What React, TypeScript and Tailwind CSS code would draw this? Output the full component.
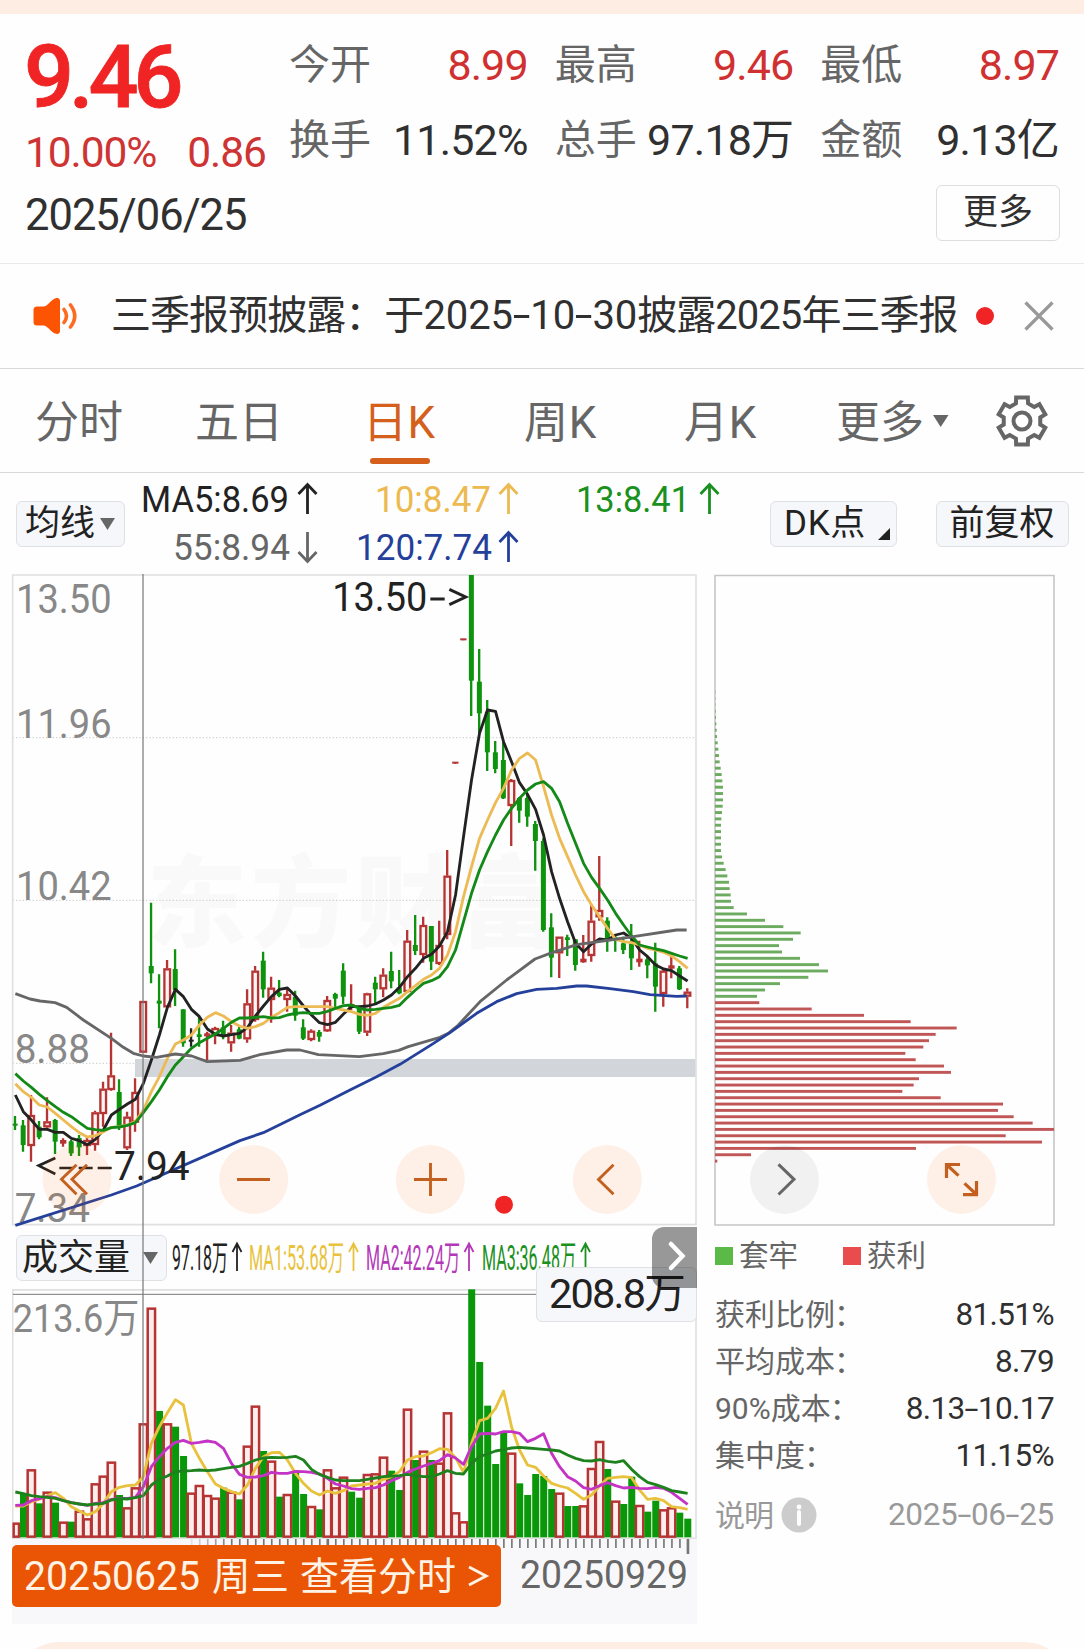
import React from 'react';

type Tone = 'r' | 'g' | 'k';
// [tone, high, body top, body bottom, low]
type Candle = [Tone, number, number, number, number];

const STEP = 24.01;
const START = 46;

const candles: Candle[] = [
  ['g', 648, 671, 677, 690], ['g', 660, 676, 735, 755], ['r', 585, 645, 738, 785], ['g', 663, 680, 712, 718],
  ['r', 592, 664, 682, 685], ['g', 657, 660, 725, 762], ['r', 715, 720, 731, 740], ['g', 720, 724, 760, 768],
  ['g', 705, 714, 742, 768], ['r', 710, 720, 738, 765], ['r', 632, 637, 735, 752], ['r', 545, 566, 642, 680],
  ['r', 398, 526, 570, 572], ['g', 538, 576, 680, 690], ['r', 635, 650, 745, 750], ['r', 535, 576, 668, 695],
  ['r', 303, 303, 458, 458], ['g', 8, 198, 220, 250], ['g', 223, 302, 311, 385], ['r', 180, 205, 322, 322],
  ['g', 148, 207, 270, 318], ['g', 328, 328, 430, 440], ['k', 385, 419, 425, 440], ['g', 350, 403, 411, 440],
  ['r', 395, 400, 409, 480], ['r', 380, 384, 408, 433], ['g', 362, 382, 408, 418], ['r', 375, 398, 430, 455],
  ['g', 378, 388, 416, 418], ['r', 268, 310, 418, 428], ['r', 198, 212, 360, 365], ['g', 155, 182, 268, 293],
  ['r', 230, 263, 300, 368], ['g', 240, 278, 288, 292], ['r', 268, 282, 300, 335], ['g', 272, 290, 347, 362],
  ['g', 358, 382, 416, 420], ['r', 388, 392, 420, 424], ['g', 390, 396, 410, 425], ['r', 288, 300, 394, 396],
  ['g', 278, 282, 296, 325], ['g', 190, 212, 290, 312], ['r', 253, 312, 322, 330], ['g', 318, 325, 395, 402],
  ['r', 278, 280, 398, 408], ['g', 230, 248, 268, 310], ['r', 205, 224, 268, 292], ['g', 155, 213, 244, 265],
  ['g', 210, 262, 280, 283], ['r', 90, 122, 276, 278], ['g', 45, 135, 153, 165], ['r', 50, 75, 165, 188],
  ['g', 78, 78, 185, 210], ['r', 62, 135, 192, 195], ['r', -150, -73, 105, 118], ['r', -412, -415, -409, -412],
  ['r', -782, -785, -779, -782], ['g', -975, -975, -658, -552], ['g', -753, -655, -560, -500], ['g', -600, -565, -443, -387],
  ['g', -477, -443, -393, -380], ['g', -475, -420, -305, -303], ['r', -363, -360, -282, -162], ['g', -308, -306, -268, -232],
  ['g', -315, -306, -250, -220], ['g', -237, -228, -177, -88], ['g', -185, -177, 90, 95], ['g', 40, 82, 173, 232],
  ['r', 110, 110, 160, 234], ['g', 104, 112, 120, 168], ['g', 118, 118, 195, 212], ['r', 105, 176, 187, 188],
  ['r', 12, 62, 168, 185], ['r', -132, 30, 52, 62], ['g', 52, 62, 115, 155], ['g', 108, 112, 122, 155],
  ['g', 110, 130, 150, 162], ['g', 72, 130, 175, 210], ['r', 122, 176, 187, 200], ['g', 170, 178, 196, 235],
  ['g', 128, 190, 260, 335], ['r', 205, 212, 282, 320], ['r', 170, 196, 206, 235], ['g', 198, 205, 268, 270],
  ['r', 265, 275, 290, 325],
];

const ma5 = [
  585, 635, 660, 688, 688, 697, 697, 715, 722, 734, 718, 690, 645, 628, 612, 598, 550, 480, 405, 322, 268, 290, 328, 350,
  387, 403, 408, 404, 400, 383, 348, 318, 290, 268, 264, 288, 318, 345, 368, 374, 367, 342, 320, 320, 318, 312, 300, 285,
  262, 230, 205, 175, 163, 138, 95, -15, -190, -360, -500, -570, -566, -475, -415, -352, -317, -272, -195, -85, -5, 65,
  130, 155, 132, 117, 120, 105, 99, 115, 150, 170, 195, 207, 212, 228, 243,
];

const ma10 = [
  551, 575, 592, 615, 621, 640, 660, 680, 698, 711, 707, 695, 682, 680, 675, 665, 630, 575, 530, 475, 432, 420, 405, 375,
  352, 338, 348, 365, 378, 385, 380, 370, 352, 338, 322, 320, 320, 320, 320, 320, 325, 330, 335, 343, 346, 340, 322, 308,
  295, 275, 257, 238, 225, 205, 165, 95, -10, -100, -185, -240, -292, -335, -390, -425, -441, -420, -340, -255, -185,
  -130, -75, -25, 15, 50, 85, 118, 125, 128, 135, 145, 150, 157, 168, 185, 205,
];

const ma13 = [
  521, 543, 562, 583, 602, 620, 637, 650, 668, 685, 689, 691, 683, 681, 676, 668, 638, 605, 570, 530, 495, 470, 445, 428,
  415, 402, 385, 367, 354, 354, 352, 350, 354, 353, 345, 340, 338, 340, 340, 334, 325, 317, 315, 325, 330, 328, 325, 322,
  316, 292, 270, 250, 242, 230, 200, 150, 65, -20, -90, -145, -195, -240, -275, -305, -330, -348, -355, -335, -295,
  -230, -170, -110, -68, -35, 0, 40, 75, 108, 135, 141, 147, 152, 160, 168, 175,
];

const ma55 =
  '46,281 90,297 120,303 165,308 200,322 250,360 334,415 370,442 400,460 430,468 470,472 526,462 575,468 622,485 720,481 780,464 860,450 900,450 955,464 1078,470 1150,461 1196,451 1225,440 1320,412 1345,400 1375,375 1440,305 1520,240 1605,177 1650,160 1730,134 1830,120 1900,110 2030,90 2060,90';
const ma120 =
  '46,976 334,885 410,858 720,722 790,698 900,644 960,616 1050,570 1130,530 1200,493 1290,437 1350,398 1430,340 1490,305 1550,281 1610,268 1670,265 1730,258 1760,258 1830,266 1900,275 1950,284 2030,289 2060,288';

const volumes: [Tone, number][] = [
  ['r', 878], ['g', 790], ['r', 718], ['g', 820], ['r', 785], ['g', 818], ['r', 875], ['g', 875], ['r', 842], ['r', 865],
  ['r', 760], ['r', 737], ['r', 695], ['g', 795], ['r', 832], ['r', 772], ['r', 580], ['r', 233], ['g', 543], ['r', 580],
  ['g', 590], ['g', 678], ['r', 788], ['r', 765], ['r', 795], ['r', 803], ['g', 773], ['r', 785], ['g', 808], ['r', 647],
  ['r', 527], ['g', 663], ['r', 692], ['g', 800], ['r', 792], ['g', 728], ['g', 792], ['r', 828], ['g', 838], ['r', 718],
  ['r', 772], ['r', 740], ['g', 785], ['g', 803], ['r', 732], ['r', 730], ['r', 680], ['g', 722], ['g', 780], ['r', 536],
  ['g', 690], ['r', 662], ['g', 690], ['r', 698], ['r', 547], ['r', 847], ['r', 874], ['g', 178], ['g', 396], ['g', 527],
  ['g', 702], ['g', 605], ['r', 668], ['g', 760], ['g', 795], ['g', 732], ['g', 738], ['g', 777], ['r', 788], ['g', 828],
  ['g', 828], ['r', 826], ['r', 714], ['r', 633], ['g', 717], ['r', 812], ['g', 822], ['g', 740], ['r', 825], ['g', 845],
  ['g', 812], ['r', 838], ['r', 832], ['g', 848], ['g', 866],
];

const vol1 = [
  828, 828, 815, 808, 797, 788, 805, 830, 843, 855, 845, 820, 785, 772, 767, 765, 740, 640, 590, 548, 509, 525, 640, 685,
  725, 762, 775, 785, 792, 765, 715, 680, 668, 667, 690, 730, 760, 783, 795, 783, 790, 782, 768, 765, 762, 760, 748, 740,
  725, 690, 680, 678, 668, 656, 658, 683, 727, 640, 572, 565, 535, 483, 590, 660, 705, 712, 738, 760, 768, 774, 790, 808,
  795, 768, 745, 742, 740, 743, 780, 808, 805, 812, 830, 833, 838,
];

const vol2 = [
  826, 825, 812, 806, 800, 803, 812, 818, 822, 826, 820, 818, 808, 805, 805, 802, 770, 710, 680, 655, 637, 631, 640, 637,
  633, 637, 655, 700, 733, 742, 741, 737, 727, 730, 730, 724, 725, 727, 732, 745, 762, 768, 776, 778, 775, 773, 765, 752,
  742, 727, 717, 708, 700, 692, 674, 684, 703, 650, 612, 610, 612, 605, 605, 610, 635, 625, 611, 670, 710, 740, 753, 773,
  778, 767, 758, 767, 774, 772, 775, 776, 772, 775, 787, 805, 823,
];

const vol3 = [
  786, 791, 797, 800, 802, 805, 812, 818, 822, 825, 822, 820, 810, 806, 807, 803, 797, 765, 748, 738, 725, 723, 722, 720,
  722, 720, 716, 712, 709, 700, 690, 684, 682, 683, 682, 679, 690, 718, 733, 742, 750, 752, 752, 752, 748, 744, 740, 738,
  737, 733, 737, 740, 740, 732, 722, 730, 732, 700, 680, 672, 663, 659, 654, 652, 654, 656, 658, 660, 663, 675, 685, 692,
  693, 689, 694, 697, 692, 718, 740, 757, 764, 772, 782, 786, 790,
];

const trapped = [
  1, 1, 1, 2, 3, 4, 5, 6, 8, 10, 12, 14, 17, 20, 22, 24, 24, 24, 23, 21, 19, 18, 18, 18, 18, 18, 21, 26, 32, 37, 42, 44,
  47, 48, 56, 96, 150, 205, 257, 234, 192, 201, 255, 312, 339, 280, 195, 150, 126,
];
const profit = [
  133, 290, 447, 587, 725, 662, 642, 625, 571, 602, 687, 708, 612, 596, 562, 677, 864, 849, 896, 953, 1017, 872, 981,
  603, 108, 7,
];

const toneColor = { r: '#b73434', g: '#0f930f', k: '#222222' };

const xAt = (i: number) => START + STEP * i;
const line = (values: number[]) => values.map((v, i) => `${xAt(i).toFixed(1)},${v}`).join(' ');

const gearPoints = [0, 1, 2, 3, 4, 5]
  .flatMap(k => {
    const base = k * 60 - 90;
    return [[18.6, -19], [24.2, -14], [24.2, 14], [18.6, 19]].map(([r, off]) => {
      const a = ((base + off) * Math.PI) / 180;
      return `${(26 + r * Math.cos(a)).toFixed(2)},${(26 + r * Math.sin(a)).toFixed(2)}`;
    });
  })
  .join(' ');

interface LabelProps {
  x: number;
  y: number;
  w: number;
  size: number;
  fill: string;
  children: string;
}

const Label = ({ x, y, w, size, fill, children }: LabelProps) => (
  <text x={x} y={y} fontSize={size} fill={fill} textLength={w} lengthAdjust="spacingAndGlyphs">
    {children}
  </text>
);

// Roboto's hyphen is narrow, dates and ranges use a wider one
const Dashed = ({ text }: { text: string }) => (
  <>
    {text.split('-').map((part, i) => (
      <React.Fragment key={i}>
        {i > 0 && <span className="inline-block mx-[0.08em] scale-x-160">-</span>}
        {part}
      </React.Fragment>
    ))}
  </>
);

const Stat = ({ label, value, red }: { label: string; value: string; red?: boolean }) => (
  <div className="flex items-center justify-between h-[75px]">
    <span className="text-[41px] text-[#666]">{label}</span>
    <span className={red ? 'text-[43px] tracking-[-0.9px] text-[#d03030]' : 'text-[43px] tracking-[-0.8px] text-[#303030]'}>
      {value}
    </span>
  </div>
);

const Header = () => (
  <header className="h-[250px] flex border-b border-[#e9e9e9] pt-[14px]">
    <div className="w-[289px] pl-[25px]">
      <div className="h-[98px] leading-[98px] ml-[-1px] text-[88px] font-medium tracking-[-5px] text-[#f02424] [-webkit-text-stroke:0.8px_#f02424]">9.46</div>
      <div className="h-[54px] leading-[54px] text-[42.5px] tracking-[-1.1px] text-[#cf3434]">
        <span>10.00%</span>
        <span className="ml-[31px]">0.86</span>
      </div>
      <div className="h-[70px] leading-[72px] text-[43.5px] tracking-[-1px] text-[#303030]">2025/06/25</div>
    </div>
    <div className="w-[770px]">
      <div className="grid grid-cols-3 gap-x-[27px]">
        <Stat label="今开" value="8.99" red />
        <Stat label="最高" value="9.46" red />
        <Stat label="最低" value="8.97" red />
        <Stat label="换手" value="11.52%" />
        <Stat label="总手" value="97.18万" />
        <Stat label="金额" value="9.13亿" />
      </div>
      <button className="block ml-auto mr-[-1px] mt-[7px] w-[124px] h-[56px] rounded-[6px] border border-[#dcdfe0] text-[35px] leading-[52px] text-[#303030]">
        更多
      </button>
    </div>
  </header>
);

const Notice = () => (
  <div className="relative h-[105px] flex items-center border-b border-[#d8d8d8] pl-[33px]">
    <svg width="46" height="38" viewBox="0 0 46 38">
      <path d="M4 9.5 H11 C15 8.5 18 3 22 1.4 C25 0.2 27 1.4 27 4 V34 C27 36.6 25 37.8 22 36.6 C18 35 15 29.5 11 28.5 H4 Q0.5 28.5 0.5 25 V13 Q0.5 9.5 4 9.5Z" fill="#fd5403" />
      <path d="M31 12.5 Q36 19 31 25.5" fill="none" stroke="#fd6a20" strokeWidth="3.6" strokeLinecap="round" />
      <path d="M37.5 8 Q46 19 37.5 30" fill="none" stroke="#fd6a20" strokeWidth="3.6" strokeLinecap="round" />
    </svg>
    <span className="ml-[32px] text-[40px] tracking-[-0.95px] text-[#303030]">
      三季报预披露：于
      <span className="tracking-[-0.1px]"><Dashed text="2025-10-30" /></span>
      披露2025年三季报
    </span>
    <i className="absolute left-[976px] size-[18px] rounded-full bg-[#f02424]" />
    <svg className="absolute left-[1024px]" width="30" height="30" viewBox="0 0 30 30">
      <path d="M1.5 1.5 L28.5 28.5 M28.5 1.5 L1.5 28.5" stroke="#999" strokeWidth="3.2" />
    </svg>
  </div>
);

const Tabs = () => (
  <nav className="relative h-[104px] flex items-center border-b border-[#d8d8d8] text-[44px] text-[#666]">
    <span className="w-[160px] pl-[35px] pt-[4px]">分时</span>
    <span className="w-[170px] pl-[35px] pt-[4px]">五日</span>
    <span className="w-[160px] pl-[33px] pt-[4px] tracking-[0.5px] text-[#d4601c]">日K</span>
    <span className="w-[160px] pl-[34px] pt-[4px] tracking-[0.8px]">周K</span>
    <span className="w-[186px] pl-[34px] pt-[4px] tracking-[0.8px]">月K</span>
    <span className="pt-[4px]">更多</span>
    <svg className="ml-[9px]" width="16" height="12" viewBox="0 0 16 12">
      <path d="M0 0 H15.5 L7.7 12Z" fill="#666" />
    </svg>
    <svg className="ml-[47px]" width="52" height="52" viewBox="0 0 52 52" fill="none" stroke="#666" strokeWidth="4">
      <polygon points={gearPoints} />
      <circle cx="26" cy="26" r="8.5" />
    </svg>
    <i className="absolute left-[370px] top-[89px] w-[60px] h-[6px] rounded-full bg-[#d4601c]" />
  </nav>
);

const chip = 'flex items-center h-[46px] rounded-[6px] border border-[#dfe1e5] bg-[#f6f7fa] text-[35px] text-[#222] leading-none';

const Indicators = () => (
  <div className="h-[102px] flex items-center">
    <div className={`${chip} ml-[16px] w-[109px] pl-[8px]`}>
      <span className="pb-px">均线</span>
      <svg className="ml-[5px]" width="15" height="12" viewBox="0 0 15 12"><path d="M0 0 H15 L7.5 12Z" fill="#666" /></svg>
    </div>
    <svg className="ml-[10px]" width="600" height="102" viewBox="135 473 600 102">
      <Label x={141} y={512} w={148} size={36.5} fill="#222">MA5:8.69</Label>
      <Label x={375} y={512} w={116} size={36.5} fill="#ecba50">10:8.47</Label>
      <Label x={576} y={512} w={114} size={36.5} fill="#1a9020">13:8.41</Label>
      <Label x={173} y={560} w={117} size={36.5} fill="#666">55:8.94</Label>
      <Label x={356} y={560} w={136} size={36.5} fill="#24409a">120:7.74</Label>
      <g fill="none" strokeWidth="2.8">
        <path d="M307.5 514 V485 M298.5 494 L307.5 484.5 L316.5 494" stroke="#222" />
        <path d="M508.5 514 V485 M499.5 494 L508.5 484.5 L517.5 494" stroke="#ecba50" />
        <path d="M709.5 514 V485 M700.5 494 L709.5 484.5 L718.5 494" stroke="#1a9020" />
        <path d="M307.5 532 V561 M298.5 552 L307.5 561.5 L316.5 552" stroke="#666" />
        <path d="M508.5 562 V533 M499.5 542 L508.5 532.5 L517.5 542" stroke="#24409a" />
      </g>
    </svg>
    <div className={`${chip} relative ml-[35px] w-[127px] pl-[13px]`}>
      <span className="pb-px tracking-[0.7px]">DK点</span>
      <svg className="absolute right-[6px] bottom-[6px]" width="12" height="12" viewBox="0 0 12 12"><path d="M12 0 V12 H0Z" fill="#222" /></svg>
    </div>
    <div className={`${chip} ml-[39px] w-[133px] justify-center`}>
      <span className="pb-px mr-[1px]">前复权</span>
    </div>
  </div>
);

const PriceChart = () => (
  <svg className="block overflow-visible" width="685" height="651" viewBox="36 -978 2055 1953">
    <g fill="#f9f9f9" fontSize="300" fontWeight="900">
      <text x="440" y="116" textLength="1240">东方财富</text>
    </g>
    <g stroke="#c9c9c9" strokeWidth="3" strokeDasharray="4 6">
      <path d="M38 -487 H2088 M38 1 H2088 M38 490 H2088" />
    </g>
    <rect x="405" y="477" width="1683" height="54" fill="#d2d6db" />
    <path d="M38 -975 H2088 V974 H38Z" fill="none" stroke="#e0e0e0" strokeWidth="5" />
    <Label x={48} y={-861} w={287} size={122} fill="#888">13.50</Label>
    <Label x={48} y={-486} w={287} size={122} fill="#888">11.96</Label>
    <Label x={48} y={0} w={287} size={122} fill="#888">10.42</Label>
    <Label x={44} y={488} w={226} size={122} fill="#888">8.88</Label>
    <Label x={44} y={965} w={226} size={122} fill="#888">7.34</Label>
    {candles.map(([tone, high, top, bottom, low], i) => {
      const x = xAt(i) - 1;
      const color = toneColor[tone];
      const hollow = tone === 'r' && bottom - top > 13;
      return (
        <g key={i}>
          <path d={`M${x} ${high} V${hollow ? top : bottom} M${x} ${bottom} V${low}`} stroke={color} strokeWidth="7" />
          {hollow ? (
            <rect x={x - 8} y={top + 3} width="17" height={bottom - top - 6} fill="#fff4f4" stroke={color} strokeWidth="7" />
          ) : (
            <rect x={tone === 'r' ? x - 9 : x - 7} y={top} width={tone === 'r' ? 19 : 15} height={bottom - top} fill={color} />
          )}
        </g>
      );
    })}
    <g fill="none" strokeWidth="8.5" strokeLinejoin="round">
      <polyline points={line(ma5)} stroke="#222" />
      <polyline points={line(ma10)} stroke="#edbb55" />
      <polyline points={line(ma13)} stroke="#138a17" />
      <polyline points={ma55} stroke="#666" />
      <polyline points={ma120} stroke="#24409a" />
    </g>
    <Label x={997} y={-867} w={285} size={122} fill="#222">13.50</Label>
    <path d="M1291 -903 H1334 M1348 -932 L1397 -909 L1348 -886" fill="none" stroke="#222" strokeWidth="9" />
    <Label x={342} y={839} w={227} size={122} fill="#222">7.94</Label>
    <path d="M166 774 L116 797 L166 822 M178 804 H220 M236 804 H278 M293 804 H335" fill="none" stroke="#222" strokeWidth="8" />
  </svg>
);

const VolumeHeader = () => (
  <div className="relative h-[64px] flex items-center pt-[2px]">
    <div className={`${chip} ml-[4px] w-[151px] pl-[5px]`}>
      <span className="pb-px text-[36px]">成交量</span>
      <svg className="ml-[13px]" width="15" height="12" viewBox="0 0 15 12"><path d="M0 0 H15 L7.5 12Z" fill="#666" /></svg>
    </div>
    <svg className="ml-[4px]" width="430" height="44" viewBox="171 1236 430 44">
      <Label x={172} y={1270} w={56} size={34.5} fill="#222">97.18万</Label>
      <Label x={249} y={1270} w={95} size={34.5} fill="#e8c23c">MA1:53.68万</Label>
      <Label x={366} y={1270} w={94} size={34.5} fill="#b338b8">MA2:42.24万</Label>
      <Label x={482} y={1270} w={94} size={34.5} fill="#1a9020">MA3:36.48万</Label>
      <g fill="none" strokeWidth="1.8">
        <path d="M237 1271 V1243 M232.500 1252 L237 1243.5 L241.5 1252" stroke="#222" />
        <path d="M353.5 1271 V1243 M349 1252 L353.5 1243.5 L358 1252" stroke="#e8c23c" />
        <path d="M469 1271 V1243 M464.5 1252 L469 1243.5 L473.5 1252" stroke="#b338b8" />
        <path d="M585.5 1271 V1243 M581 1252 L585.5 1243.5 L590 1252" stroke="#1a9020" />
      </g>
    </svg>
    <div className="absolute left-[524px] top-[42px] z-10 w-[161px] h-[55px] rounded-[6px] border border-[#dfe1e5] bg-[#f6f7fa]">
      <span className="block pl-[12px] text-[41.5px] leading-[52px] text-[#222] tracking-[-1.8px]">208.8万</span>
    </div>
    <div className="absolute left-[640px] top-[2px] z-20 w-[45px] h-[61px] rounded-l-[12px] bg-black/40 flex items-center justify-center">
      <svg width="18" height="30" viewBox="0 0 18 30" className="ml-[4px] mt-[-4px]">
        <path d="M3 3 L14.5 15 L3 27" fill="none" stroke="#fff" strokeWidth="4.5" strokeLinecap="round" />
      </svg>
    </div>
  </div>
);

const VolumeChart = () => (
  <svg className="block" width="685" height="250" viewBox="36 177 2055 750">
    <path d="M38 179.5 H2088 V925 H38Z" fill="none" stroke="#e0e0e0" strokeWidth="5" />
    <path d="M39 193 H2088" stroke="#777" strokeWidth="3" />
    <Label x={38} y={306} w={380} size={118} fill="#888">213.6万</Label>
    {volumes.map(([tone, top], i) => {
      const x = xAt(i);
      return tone === 'r' ? (
        <rect key={i} x={Math.max(x - 11, 41)} y={top + 3} width={x - 11 < 41 ? 16 : 22} height={917 - top} fill="#fdeeee" stroke="#b73434" strokeWidth="7.5" />
      ) : (
        <rect key={i} x={x - 10} y={top} width="21" height={922 - top} fill="#0a980a" />
      );
    })}
    <g fill="none" strokeWidth="8.5" strokeLinejoin="round">
      <polyline points={line(vol1)} stroke="#e8c23c" />
      <polyline points={line(vol2)} stroke="#c434c4" />
      <polyline points={line(vol3)} stroke="#1d821d" />
    </g>
  </svg>
);

const DateBar = () => (
  <div className="relative h-[85px] bg-[#f8f8fa]">
    <svg className="block" width="685" height="16" viewBox="36 930 2055 48">
      {volumes.map((_, i) =>
        i > 21 ? (
          <path key={i} d={`M${xAt(i) + 1} 930 V${i === 84 ? 975 : 957}`} stroke="#777" strokeWidth={i === 84 || i === 39 ? 8 : 5} opacity={Math.min(1, (i - 21) / 6)} />
        ) : null
      )}
    </svg>
    <div className="absolute left-0 top-[6px] w-[489px] h-[62px] rounded-[5px] bg-[#e95504]" />
    <svg className="absolute left-0 top-px" width="685" height="84" viewBox="12 1540 685 84">
      <Label x={24} y={1590} w={176} size={41} fill="#fff3e6">20250625</Label>
      <Label x={212} y={1590} w={77} size={39} fill="#fff3e6">周三</Label>
      <Label x={300} y={1590} w={156} size={39} fill="#fff3e6">查看分时</Label>
      <path d="M469 1567 L486 1576 L469 1585" fill="none" stroke="#fff3e6" strokeWidth="3" />
      <Label x={520} y={1588} w={168} size={38.5} fill="#666">20250929</Label>
    </svg>
  </div>
);

const CostChart = () => (
  <svg className="block" width="341" height="652" viewBox="714 574 341 652">
    <path d="M715 575.5 H1054 V1225 H715Z" fill="none" stroke="#c6c6c6" strokeWidth="1.6" />
    {[...trapped, ...profit].map((v, i) => (
      <rect key={i} x="715" y={690.7 + i * 6.337} width={v / 3} height="2.9" fill={i < trapped.length ? '#6cab60' : '#c05656'} />
    ))}
  </svg>
);

const Row = ({ label, value }: { label: string; value: string }) => (
  <div className="flex items-center justify-between h-[47px]">
    <span className="text-[30px] text-[#666]">
      {label}
      <span className="ml-[-1px]">：</span>
    </span>
    <span className="text-[31.5px] tracking-[-0.6px] text-[#303030]">
      <Dashed text={value} />
    </span>
  </div>
);

const CostStats = () => (
  <div className="w-[340px] pl-px">
    <div className="flex items-center h-[65px] pb-[5px] text-[29.5px] text-[#666]">
      <i className="size-[18px] bg-[#5bba47]" />
      <span className="ml-[6px]">套牢</span>
      <i className="ml-[45px] size-[18px] bg-[#e84c4c]" />
      <span className="ml-[6px]">获利</span>
    </div>
    <Row label="获利比例" value="81.51%" />
    <Row label="平均成本" value="8.79" />
    <Row label="90%成本" value="8.13-10.17" />
    <Row label="集中度" value="11.15%" />
    <div className="mt-[11px] flex items-center h-[50px] text-[30px] text-[#999]">
      <span className="tracking-[-1px]">说明</span>
      <svg className="ml-[8px]" width="36" height="36" viewBox="0 0 36 36">
        <circle cx="18" cy="18" r="17.5" fill="#ccc" />
        <path d="M18 15 V27" stroke="#fff" strokeWidth="4" strokeLinecap="round" />
        <circle cx="18" cy="10" r="2.4" fill="#fff" />
      </svg>
      <span className="ml-auto text-[31.5px] tracking-[-0.3px]"><Dashed text="2025-06-25" /></span>
    </div>
  </div>
);

// Round zoom / pan controls that float over both charts
const Controls = () => (
  <svg className="absolute left-0 top-[566px] z-10 pointer-events-none" width="1084" height="90" viewBox="0 1140 1084 90">
    {[77, 253.7, 430.3, 607.3, 961.5].map(cx => (
      <circle key={cx} cx={cx} cy="1179.5" r="34.5" fill="#ff6000" opacity="0.09" />
    ))}
    <circle cx="784.5" cy="1179.5" r="34.5" fill="#000" opacity="0.05" />
    <g fill="none" stroke="#c4601f" strokeWidth="2.9">
      <path d="M76.5 1164.7 L61.5 1179.3 L76.5 1194.3 M87 1164.7 L72 1179.3 L87 1194.3" />
      <path d="M237 1179.5 H270 M414 1179.5 H447 M430.5 1163 V1196" />
      <path d="M613.5 1164.7 L598.5 1179.5 L613.5 1194.3" />
      <path d="M946.5 1178 V1164.5 H960 M947 1165 L958.5 1175.7 M963 1194.7 H976.5 V1181 M976 1194 L964.5 1183.3" strokeWidth="3.2" />
    </g>
    <path d="M778.5 1164.3 L794 1179.3 L778.5 1194.5" fill="none" stroke="#666" strokeWidth="3" />
    <circle cx="504" cy="1204.7" r="9" fill="#f02424" />
  </svg>
);

const App = () => (
  <div className="relative w-[1084px] h-[1649px] overflow-hidden bg-[#fefefe] whitespace-nowrap font-['Roboto','Noto_Sans_CJK_SC',sans-serif]">
    <div className="h-[14px] bg-[#fdede3]" />
    <Header />
    <Notice />
    <Tabs />
    <Indicators />
    <main className="relative mt-[-1px] flex">
      <section className="relative ml-[12px] w-[685px]">
        <PriceChart />
        <VolumeHeader />
        <VolumeChart />
        <i className="absolute left-[130px] top-0 w-[2px] h-[971px] bg-[#777]/60" />
        <DateBar />
      </section>
      <section className="ml-[17px]">
        <CostChart />
        <CostStats />
      </section>
      <Controls />
    </main>
    <div className="mx-[12px] mt-[18px] h-[100px] rounded-t-[48px] bg-[#fdede3]" />
  </div>
);

export default App;
